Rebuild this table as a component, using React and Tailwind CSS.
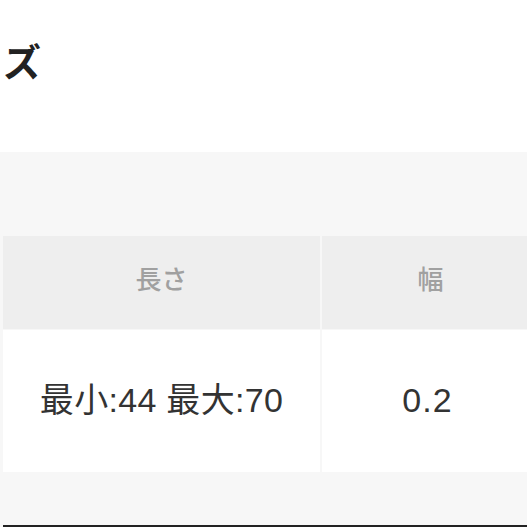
export default function App() {
  return (
    <div
      className="w-[527px] h-[527px] overflow-hidden bg-white flex flex-col"
      style={{ fontFamily: '"Liberation Sans", "Noto Sans CJK JP", sans-serif' }}
    >
      <div className="h-[152px] shrink-0 pt-[38px] pl-[3px]">
        <h2 className="text-[38px] leading-[50px] font-bold text-[#222]">ズ</h2>
      </div>
      <div className="flex-1 bg-[#f7f7f7] pt-[84px] pl-[3px] flex flex-col">
        <div className="flex w-[560px] gap-[2px]">
          <div className="w-[317px] h-[93px] bg-[#eeeeee] flex items-center justify-center pb-[4px] text-[26px] font-medium text-[#a0a0a0]">
            長さ
          </div>
          <div className="flex-1 h-[93px] bg-[#eeeeee] flex items-center justify-center pr-[24px] pb-[4px] text-[26px] font-medium text-[#a0a0a0]">
            幅
          </div>
        </div>
        <div className="flex w-[560px] gap-[2px] mt-[1px]">
          <div className="w-[317px] h-[142px] bg-white flex items-center justify-center pb-[2px] text-[34px] tracking-[0.3px] text-[#333]">
            最小:44 最大:70
          </div>
          <div className="flex-1 h-[142px] bg-white flex items-center justify-center pr-[30px] pb-[2px] text-[34px] tracking-[1px] text-[#333]">
            0.2
          </div>
        </div>
        <div className="flex-1" />
        <div className="h-[2px] shrink-0 bg-[#222]" />
      </div>
    </div>
  );
}
